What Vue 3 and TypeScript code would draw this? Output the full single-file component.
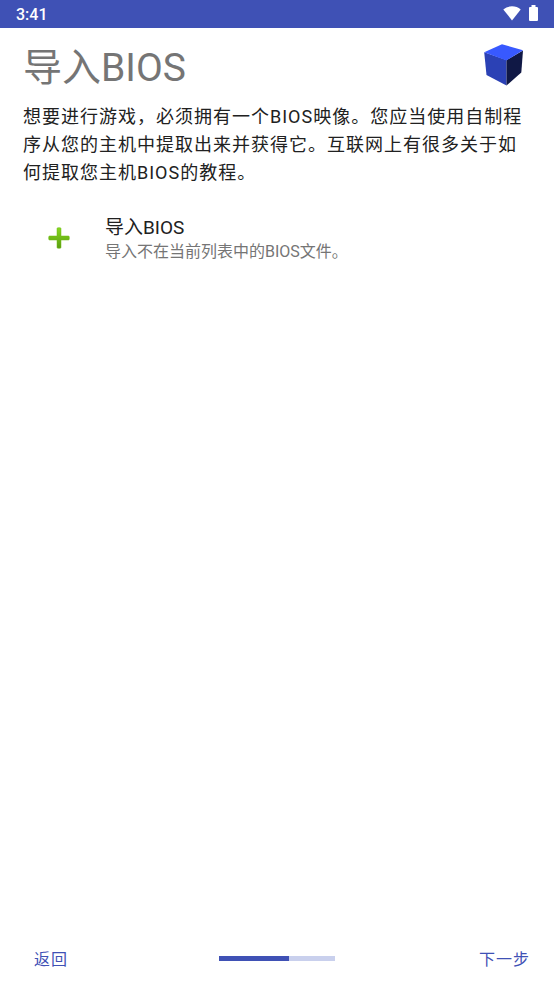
<script setup lang="ts">
import { ref } from 'vue'

const step = ref<number>(3)
const stepCount = 5
</script>

<template>
  <div class="screen">
    <header class="status">
      <time class="clock">3:41</time>
      <div class="status-icons">
        <svg class="wifi" viewBox="0 0 18 15" aria-hidden="true">
          <path d="M0.3 3.4C2.7 1.4 5.7 0.3 9 0.3s6.300 1.100 8.700 3.100L9 14.400z" fill="#fff" />
        </svg>
        <svg class="battery" viewBox="0 0 9 16" aria-hidden="true">
          <path d="M2.500 0h4v2H8a1 1 0 0 1 1 1v12a1 1 0 0 1-1 1H1a1 1 0 0 1-1-1V3a1 1 0 0 1 1-1h1.500z" fill="#fff" />
        </svg>
      </div>
    </header>

    <main class="content">
      <div class="heading">
        <h1>导入BIOS</h1>
        <svg class="cube" viewBox="0 0 40 42" aria-hidden="true">
          <path d="M0.200 8.200 22.500 16v25.500L2.500 31z" fill="#2b41b5" />
          <path d="M22.500 16 39 6.500 37.300 28.500 22.500 41.500z" fill="#101845" />
          <path d="M0.200 8.200 18 0.200 39 6.300 22.500 16.500z" fill="#3859ff" />
        </svg>
      </div>
      <p class="intro">想要进行游戏，必须拥有一个BIOS映像。您应当使用自制程序从您的主机中提取出来并获得它。互联网上有很多关于如何提取您主机BIOS的教程。</p>
      <button class="item" type="button">
        <svg class="plus" viewBox="0 0 22 22" aria-hidden="true">
          <defs>
            <linearGradient id="plus-fill" x1="0" y1="0" x2="0" y2="1">
              <stop offset="0" stop-color="#86d820" />
              <stop offset="1" stop-color="#5a9d10" />
            </linearGradient>
          </defs>
          <path d="M10 0.700h2q1 0 1 1v7.300h7.300q1 0 1 1v2q0 1-1 1H13v7.300q0 1-1 1h-2q-1 0-1-1V13H1.700q-1 0-1-1v-2q0-1 1-1H9V1.700q0-1 1-1z" fill="url(#plus-fill)" stroke="#6dbb12" stroke-width=".5" />
        </svg>
        <span class="item-text">
          <span class="item-title">导入BIOS</span>
          <span class="item-note">导入不在当前列表中的BIOS文件。</span>
        </span>
      </button>
    </main>

    <footer class="nav">
      <button class="nav-button back" type="button">返回</button>
      <div class="progress" role="progressbar" aria-label="3 / 5" aria-valuemin="0" :aria-valuemax="stepCount" :aria-valuenow="step">
        <div class="progress-fill" :style="{ width: (step / stepCount) * 100 + '%' }"></div>
      </div>
      <button class="nav-button next" type="button">下一步</button>
    </footer>
  </div>
</template>

<style>
body {
  margin: 0;
  background: #fff;
}
</style>

<style scoped>
.screen {
  display: flex;
  flex-direction: column;
  min-height: 100vh;
  background: #fff;
  color: #212121;
  font-family: Roboto, "Noto Sans CJK SC", sans-serif;
}

button {
  border: 0;
  padding: 0;
  background: none;
  color: inherit;
  font: inherit;
  text-align: left;
  cursor: pointer;
}

.status {
  display: flex;
  align-items: center;
  justify-content: space-between;
  box-sizing: border-box;
  height: 28px;
  padding: 0 16px;
  background: #3f51b5;
  color: #fff;
}

.clock {
  font-size: 16px;
  font-weight: 500;
}

.status-icons {
  display: flex;
  align-items: center;
  gap: 8px;
  height: 28px;
  padding-bottom: 2px;
}

.wifi {
  width: 18px;
  height: 15px;
}

.battery {
  width: 9px;
  height: 16px;
}

.content {
  flex: 1;
  padding: 12px 23px;
}

.heading {
  display: flex;
  align-items: center;
  justify-content: space-between;
  height: 50px;
  padding-right: 7px;
}

h1 {
  margin: 0;
  padding-top: 6px;
  color: #757575;
  font-size: 39px;
  font-weight: 400;
  line-height: 56px;
}

.cube {
  width: 40px;
  height: 42px;
}

.intro {
  margin: 13px 0 26px;
  font-size: 18px;
  line-height: 28px;
  letter-spacing: 1px;
}

.item {
  display: flex;
  align-items: center;
  gap: 35px;
  width: 100%;
  padding-left: 25px;
}

.plus {
  width: 22px;
  height: 22px;
}

.item-text {
  display: flex;
  flex-direction: column;
  padding-top: 2px;
}

.item-title {
  font-size: 19px;
  line-height: 25px;
}

.item-note {
  color: #757575;
  font-size: 16px;
  line-height: 23px;
}

.nav {
  display: grid;
  grid-template-columns: 1fr 116px 1fr;
  align-items: center;
  height: 56px;
  padding: 0 24px;
}

.nav-button {
  justify-self: start;
  padding-top: 3px;
  color: #3f51b5;
  font-size: 16px;
  line-height: 36px;
  letter-spacing: 1px;
}

.back {
  padding-left: 10px;
}

.next {
  justify-self: end;
}

.progress {
  height: 5px;
  background: #c9d0ed;
}

.progress-fill {
  height: 100%;
  background: #3f51b5;
}
</style>
